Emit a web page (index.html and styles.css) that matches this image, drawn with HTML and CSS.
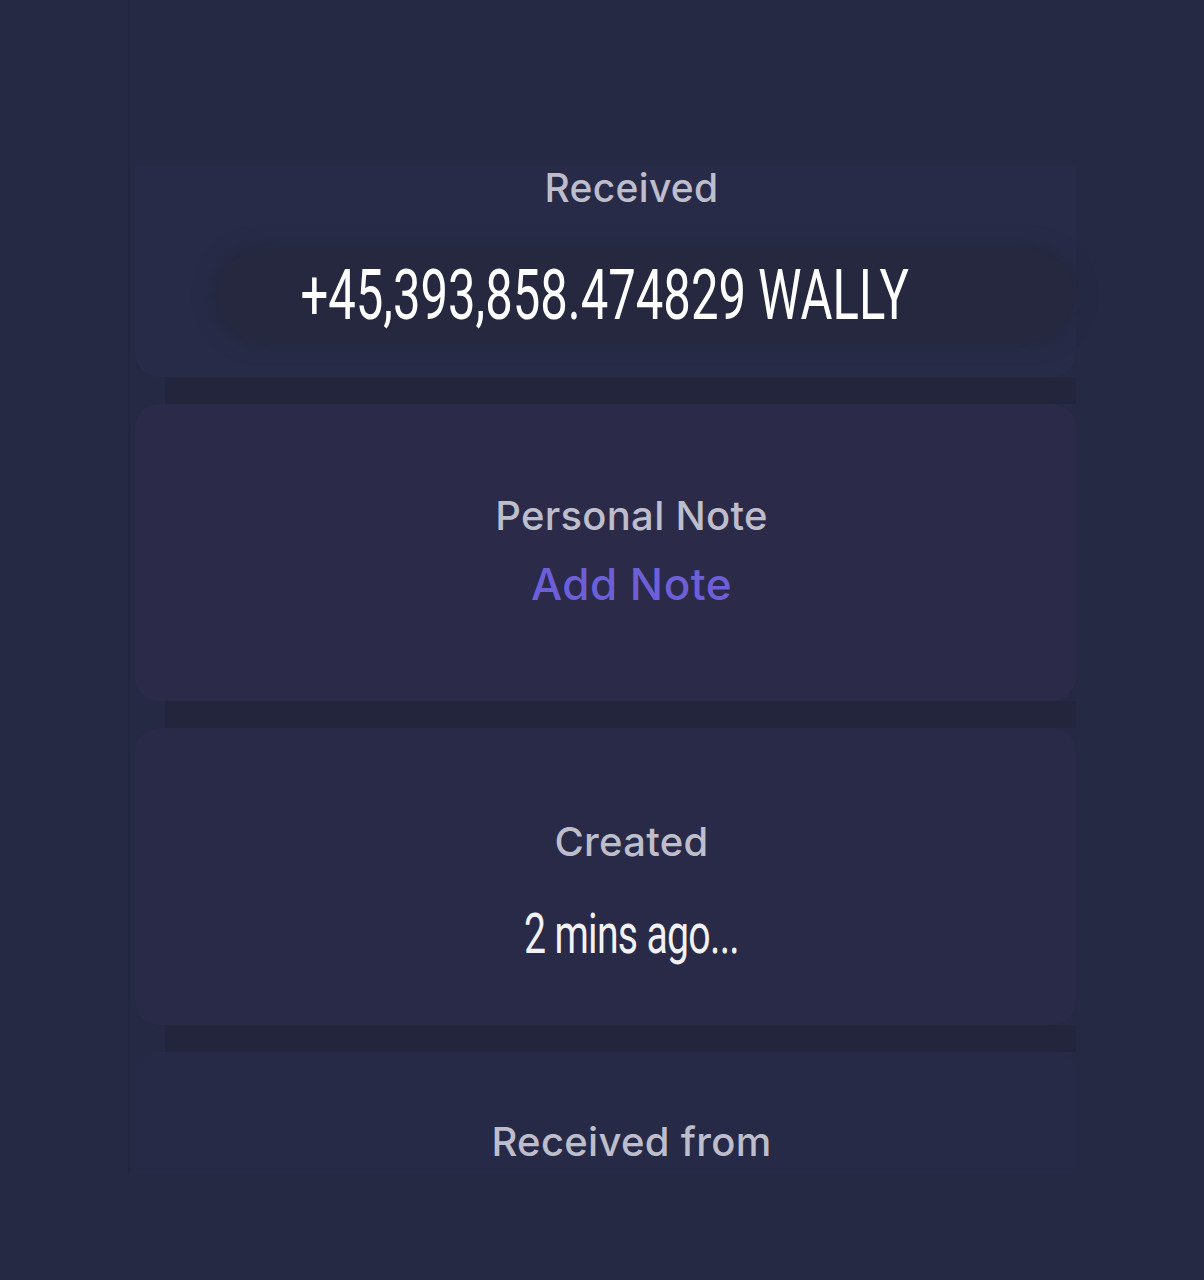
FILE: index.html
```html
<!DOCTYPE html>
<html lang="en">
<head>
<meta charset="utf-8">
<title>Transaction</title>
<link rel="stylesheet" href="styles.css">
</head>
<body>
<main class="column">
  <section class="card card-received">
    <div class="label label-received">Received</div>
    <div class="amount-pill">
      <span class="amount">+45,393,858.474829 WALLY</span>
    </div>
  </section>
  <div class="divider"></div>
  <section class="card card-note">
    <div class="label">Personal Note</div>
    <div class="link">Add Note</div>
  </section>
  <div class="divider"></div>
  <section class="card card-created">
    <div class="label">Created</div>
    <div class="value"><span class="condensed">2 mins ago...</span></div>
  </section>
  <div class="divider"></div>
  <section class="card card-from">
    <div class="label">Received from</div>
  </section>
</main>
</body>
</html>
```

FILE: styles.css
```css
html, body {
  margin: 0;
  padding: 0;
}
body {
  background: #262944;
  width: 1204px;
  height: 1280px;
  overflow: hidden;
  font-family: "Inter", "Noto Sans", sans-serif;
  -webkit-font-smoothing: antialiased;
}
.column {
  width: 948px;
  margin: 0 auto;
  padding-top: 165px;
  padding-left: 5px;
  box-sizing: border-box;
  display: flex;
  flex-direction: column;
  border-left: 2px solid #23263f;
}
.card {
  background: #292c49;
  border-radius: 24px;
  display: flex;
  flex-direction: column;
  align-items: center;
  box-sizing: border-box;
}
.divider {
  height: 27px;
  margin-left: 30px;
  background: #22253c;
}
.card-received {
  height: 212px;
  border-radius: 0 0 24px 24px;
  background: #282b48;
}
.card-note {
  height: 297px;
  justify-content: center;
  background: #2c2a49;
  padding-bottom: 4px;
}
.card-created {
  height: 297px;
  justify-content: center;
  background: #282a47;
  padding-top: 42px;
}
.card-from {
  height: 122px;
  background: #272a46;
  padding-top: 66px;
  border-radius: 24px 24px 0 0;
}
.label {
  color: #bdbdcb;
  font-size: 40px;
  font-weight: 500;
  line-height: 48px;
  letter-spacing: 0.3px;
  margin-left: 52px;
}
.label-received {
  font-size: 39px;
  line-height: 46px;
}
.amount-pill {
  margin-top: 38px;
  margin-left: 78px;
  width: 858px;
  height: 92px;
  border-radius: 46px;
  background: #25283f;
  box-shadow: 0 0 16px 6px #25283f;
  display: flex;
  align-items: center;
  justify-content: center;
  padding-right: 80px;
  box-sizing: border-box;
}
.amount {
  display: inline-block;
  color: #ffffff;
  font-family: "Roboto", "Liberation Sans", sans-serif;
  font-size: 70px;
  line-height: 70px;
  font-weight: 400;
  letter-spacing: 0;
  transform: scaleX(0.7);
  white-space: nowrap;
}
.link {
  color: #6d5fd8;
  font-size: 44px;
  font-weight: 500;
  line-height: 52px;
  margin-top: 18px;
  margin-left: 52px;
  letter-spacing: 0.5px;
}
.value {
  margin-top: 38px;
  margin-left: 52px;
  line-height: 60px;
}
.condensed {
  display: inline-block;
  color: #f2f2f6;
  font-family: "Roboto", "Liberation Sans", sans-serif;
  font-size: 56px;
  font-weight: 400;
  letter-spacing: -1px;
  transform: scaleX(0.7);
  white-space: nowrap;
}
```
